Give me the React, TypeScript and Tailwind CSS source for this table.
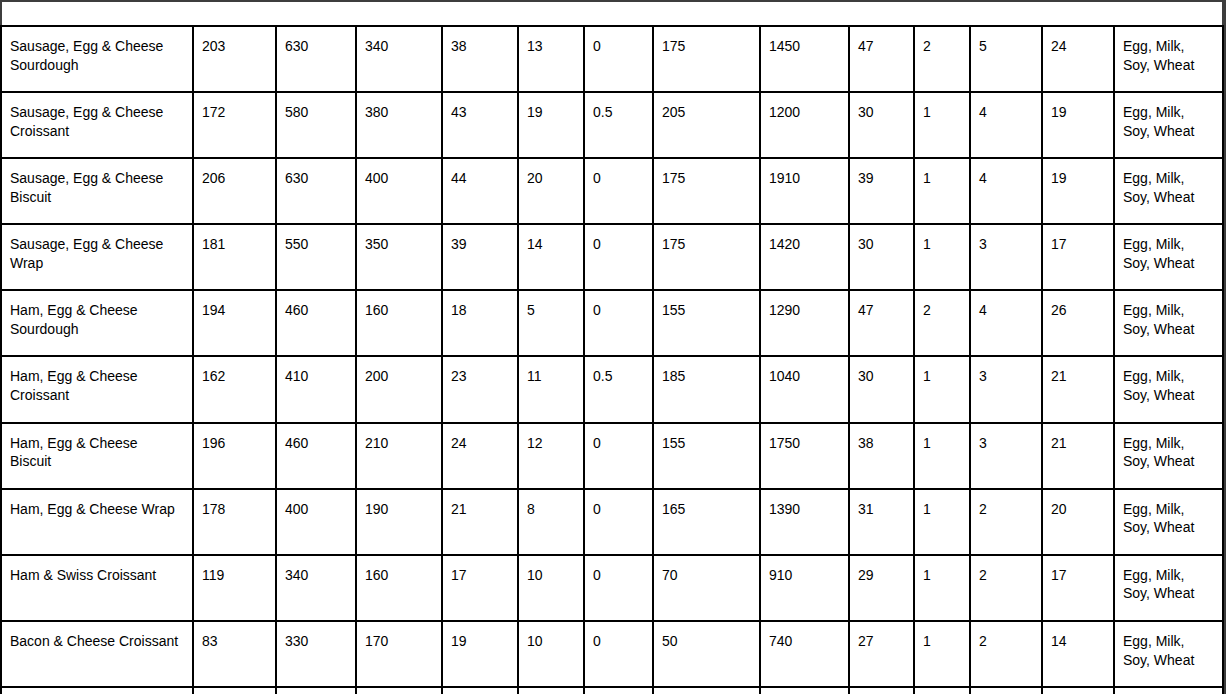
import React from "react";

const rows: string[][] = [
  ["Sausage, Egg & Cheese Sourdough", "203", "630", "340", "38", "13", "0", "175", "1450", "47", "2", "5", "24", "Egg, Milk, Soy, Wheat"],
  ["Sausage, Egg & Cheese Croissant", "172", "580", "380", "43", "19", "0.5", "205", "1200", "30", "1", "4", "19", "Egg, Milk, Soy, Wheat"],
  ["Sausage, Egg & Cheese Biscuit", "206", "630", "400", "44", "20", "0", "175", "1910", "39", "1", "4", "19", "Egg, Milk, Soy, Wheat"],
  ["Sausage, Egg & Cheese Wrap", "181", "550", "350", "39", "14", "0", "175", "1420", "30", "1", "3", "17", "Egg, Milk, Soy, Wheat"],
  ["Ham, Egg & Cheese Sourdough", "194", "460", "160", "18", "5", "0", "155", "1290", "47", "2", "4", "26", "Egg, Milk, Soy, Wheat"],
  ["Ham, Egg & Cheese Croissant", "162", "410", "200", "23", "11", "0.5", "185", "1040", "30", "1", "3", "21", "Egg, Milk, Soy, Wheat"],
  ["Ham, Egg & Cheese Biscuit", "196", "460", "210", "24", "12", "0", "155", "1750", "38", "1", "3", "21", "Egg, Milk, Soy, Wheat"],
  ["Ham, Egg & Cheese Wrap", "178", "400", "190", "21", "8", "0", "165", "1390", "31", "1", "2", "20", "Egg, Milk, Soy, Wheat"],
  ["Ham & Swiss Croissant", "119", "340", "160", "17", "10", "0", "70", "910", "29", "1", "2", "17", "Egg, Milk, Soy, Wheat"],
  ["Bacon & Cheese Croissant", "83", "330", "170", "19", "10", "0", "50", "740", "27", "1", "2", "14", "Egg, Milk, Soy, Wheat"],
  ["", "", "", "", "", "", "", "", "", "", "", "", "", ""],
];

export default function App() {
  return (
    <div
      className="w-[1226px] h-[694px] overflow-hidden bg-[#3d3d3d] pt-[2px]"
      style={{ fontFamily: '"Liberation Sans", Arial, sans-serif' }}
    >
      <div className="ml-[2px] w-[1220px] h-[23px] bg-white" />
      <div className="w-[1224px] bg-black p-[2px] pb-0 grid gap-[2px] grid-cols-[190px_81px_78px_84px_74px_64px_67px_105px_87px_63px_54px_70px_70px_107px] auto-rows-[64.1px]">
        {rows.map((r, i) =>
          r.map((c, j) => (
            <div
              key={`${i}-${j}`}
              className="bg-white text-black text-[14px] leading-[18.67px] pt-[10px] pl-[8px] pr-[12px] overflow-hidden"
            >
              {c}
            </div>
          ))
        )}
      </div>
    </div>
  );
}
